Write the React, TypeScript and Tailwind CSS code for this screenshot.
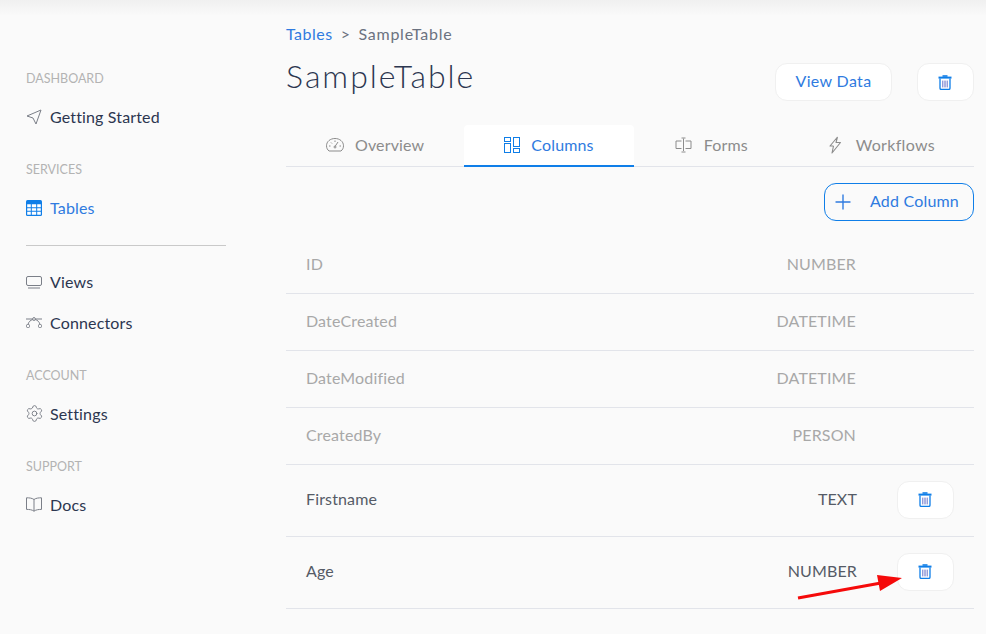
import { Settings, Plus } from "lucide-react";

const ICON_GREY = "#7b7f88";

function TableIcon() {
  return (
    <svg viewBox="0 0 16 16" className="h-4 w-4">
      <rect x="0" y="0" width="16" height="16" rx="1.5" fill="#0f7ee8" />
      <path
        d="M1.2 4.2h3.6v3h-3.6zM5.8 4.2h4.4v3h-4.4zM11.2 4.2h3.6v3h-3.6zM1.2 8.2h3.6v2.6h-3.6zM5.8 8.2h4.4v2.6h-4.4zM11.2 8.2h3.6v2.6h-3.6zM1.2 11.8h3.6v3h-3.6zM5.8 11.8h4.4v3h-4.4zM11.2 11.8h3.6v3h-3.6z"
        fill="#fff"
      />
    </svg>
  );
}

function TrashIcon() {
  return (
    <svg viewBox="0 0 14 15" className="-ml-px h-[15px] w-[14px]" fill="none">
      <path d="M0.5 1.6h13v2h-13z" fill="#0f7ee8" />
      <path d="M4.5 1.8V0.2h5v1.6z" fill="#0f7ee8" />
      <path d="M2 3.5v9.8c0 .7.5 1.1 1.1 1.1h7.8c.6 0 1.1-.4 1.1-1.1V3.5" stroke="#0f7ee8" strokeWidth="1.3" />
      <path d="M4.6 5.6v6.8M6.2 5.6v6.8M7.8 5.6v6.8M9.4 5.6v6.8" stroke="#7d84cf" strokeWidth="0.9" />
    </svg>
  );
}

function ColumnsIcon() {
  return (
    <svg viewBox="0 0 16 16" className="h-4 w-4" fill="none" stroke="#0f7ee8" strokeWidth="1">
      <rect x="0.5" y="0.5" width="6" height="4" />
      <rect x="0.5" y="6.5" width="6" height="9" />
      <rect x="9.5" y="0.5" width="6" height="9" />
      <rect x="9.5" y="11.5" width="6" height="4" />
    </svg>
  );
}

function PlaneIcon() {
  return (
    <svg viewBox="0 0 16 16" className="h-4 w-4" fill="none" stroke={ICON_GREY} strokeWidth="1" strokeLinejoin="round">
      <path d="M15 1 L1 7 L7 9 L10 15 Z" />
    </svg>
  );
}

function MonitorIcon() {
  return (
    <svg viewBox="0 0 16 16" className="h-4 w-4" fill="none" stroke={ICON_GREY} strokeWidth="1">
      <rect x="0.5" y="2.5" width="15" height="9" rx="1.5" />
      <path d="M2 14h12" />
    </svg>
  );
}

function ConnectorIcon() {
  return (
    <svg viewBox="0 0 16 16" className="h-4 w-4" fill="none" stroke={ICON_GREY} strokeWidth="1">
      <circle cx="8" cy="4" r="1.4" />
      <rect x="0.5" y="9.5" width="3" height="3" rx="1" />
      <rect x="12.5" y="9.5" width="3" height="3" rx="1" />
      <path d="M0 4h6.5M9.500 4h6.500M2 9.500C2.500 7 4.500 5 6.800 4.600M14 9.500C13.500 7 11.500 5 9.200 4.600" />
    </svg>
  );
}

function BookIcon() {
  return (
    <svg viewBox="0 0 16 16" className="h-4 w-4" fill="none" stroke={ICON_GREY} strokeWidth="1">
      <path d="M8 2.500C6 1 3 .8.5.8v11.600c2.500 0 5.500.2 7.500 1.800 2-1.600 5-1.800 7.500-1.800V.8C13 .8 10 1 8 2.500ZM8 2.500v11.700" />
    </svg>
  );
}

function GaugeIcon() {
  return (
    <svg viewBox="0 0 18 16" className="h-4 w-[18px]" fill="none" stroke="#8c8c8c" strokeWidth="1">
      <path d="M3 14h12c1.500-1.200 2.500-3 2.500-5.200C17.500 4.500 13.700 1.500 9 1.500S.5 4.500.5 8.800C.5 11 1.500 12.800 3 14Z" />
      <path d="M9 9.500 L12 5M3 9h1.500M13.500 9H15M5 5.500l1 1M9 3.500v1.500" />
      <circle cx="9" cy="10" r="1" />
    </svg>
  );
}

function FormIcon() {
  return (
    <svg viewBox="0 0 16 16" className="mr-px ml-px h-4 w-[17px]" fill="none" stroke="#8c8c8c" strokeWidth="1">
      <path d="M6 4H.5v7.500H6M10 4h5.500v7.500H10M8 1.500v12.500M6 1h4M6 15h4" />
    </svg>
  );
}

function BoltIcon() {
  return (
    <svg viewBox="0 0 14 18" className="mr-[3px] h-[18px] w-[14px]" fill="none" stroke="#8c8c8c" strokeWidth="1.100" strokeLinejoin="round">
      <path d="M9.500 1 L2 10h3.500M9.500 1 L8 6.500h4.500L4 17l1.500-7" />
    </svg>
  );
}

function NavItem({ icon, label, active }: { icon: React.ReactNode; label: string; active?: boolean }) {
  return (
    <div className={`flex h-[41px] items-center gap-2 text-base tracking-[0.15px] ${active ? "text-[#2f7be0]" : "text-[#2c3650]"}`}>
      <span className="flex w-4 shrink-0 justify-center text-[#7b7f88]">{icon}</span>
      {label}
    </div>
  );
}

function SectionLabel({ children }: { children: React.ReactNode }) {
  return <div className="mt-5 h-[30px] pt-[5px] text-[12.5px] leading-4 text-[#b3b3b3]">{children}</div>;
}

function Tab({ icon, label, active }: { icon: React.ReactNode; label: React.ReactNode; active?: boolean }) {
  return (
    <div
      className={`-mb-px flex h-[42px] items-center gap-[11px] rounded-t px-10 text-base tracking-[0.15px] ${
        active ? "border-b-2 border-[#0f7ee8] bg-white text-[#2f7be0]" : "pb-[2px] text-[#8c8c8c]"
      }`}
    >
      {icon}
      {label}
    </div>
  );
}

function DeleteButton({ className }: { className: string }) {
  return (
    <button className={`flex h-[38px] w-[57px] items-center justify-center rounded-xl border border-[#f0f0f0] bg-white ${className}`}>
      <TrashIcon />
    </button>
  );
}

const systemRows = [
  ["ID", "NUMBER"],
  ["DateCreated", "DATETIME"],
  ["DateModified", "DATETIME"],
  ["CreatedBy", "PERSON"],
];

export default function App() {
  return (
    <div className="relative flex h-[634px] w-[986px] overflow-hidden bg-[#fafafa] font-['Lato','Noto_Sans',sans-serif]">
      <div className="absolute inset-x-0 top-0 h-4 bg-gradient-to-b from-[#f0f0f0] to-[#fafafa]" />
      <aside className="w-[286px] shrink-0 pt-[46px] pl-[26px]">
        <SectionLabel>DASHBOARD</SectionLabel>
        <NavItem icon={<PlaneIcon />} label="Getting Started" />
        <SectionLabel>SERVICES</SectionLabel>
        <NavItem icon={<TableIcon />} label="Tables" active />
        <div className="mt-[17px] mb-[15px] h-px w-[200px] bg-[#c9c9c9]" />
        <NavItem icon={<MonitorIcon />} label="Views" />
        <NavItem icon={<ConnectorIcon />} label="Connectors" />
        <SectionLabel>ACCOUNT</SectionLabel>
        <NavItem icon={<Settings size={19} strokeWidth={1.2} className="shrink-0" />} label="Settings" />
        <SectionLabel>SUPPORT</SectionLabel>
        <NavItem icon={<BookIcon />} label="Docs" />
      </aside>

      <main className="relative flex w-[688px] flex-col pt-[24px]">
        <div className="flex h-5 items-center gap-2 text-base tracking-[0.5px] text-[#6b7280]">
          <span className="text-[#2f7be0]">Tables</span>
          <span>&gt;</span>
          <span className="tracking-[0.75px]">SampleTable</span>
        </div>
        <div className="mt-[10px] flex h-[52px] items-start justify-between">
          <h1 className="text-[32px] leading-[44px] font-light tracking-[2px] text-[#2c3650]">SampleTable</h1>
          <div className="flex items-center gap-[25px] pt-[9px]">
            <button className="h-[38px] w-[117px] rounded-xl border border-[#f0f0f0] bg-white pb-[2px] text-base tracking-[0.35px] text-[#2f7be0]">
              View Data
            </button>
            <DeleteButton className="" />
          </div>
        </div>

        <div className="mt-[19px] flex justify-between border-b border-[#e2e4ea]">
          <div className="flex">
            <Tab icon={<GaugeIcon />} label="Overview" />
            <Tab icon={<ColumnsIcon />} label="Columns" active />
            <Tab icon={<FormIcon />} label="Forms" />
          </div>
          <Tab icon={<BoltIcon />} label={<span className="tracking-[0.3px]">Workflows</span>} />
        </div>

        <div className="mt-4 flex justify-end">
          <button className="flex h-[38px] w-[150px] items-center rounded-xl border border-[#0f7ee8] pr-[14px] pl-[6px] text-base tracking-[0.2px] text-[#2f7be0]">
            <Plus size={24} strokeWidth={1.4} />
            <span className="ml-auto pb-[2px]">Add Column</span>
          </button>
        </div>

        <div className="mt-4 text-base tracking-[0.15px]">
          {systemRows.map(([name, type]) => (
            <div key={name} className="flex h-[57px] items-center border-b border-[#e2e4ea] pr-[118px] pl-5 text-[#a8a8a8]">
              <span className="flex-1 pb-[2px]">{name}</span>
              <span className="pb-[2px]">{type}</span>
            </div>
          ))}
          {[
            ["Firstname", "TEXT"],
            ["Age", "NUMBER"],
          ].map(([name, type]) => (
            <div key={name} className="flex h-[72px] items-center border-b border-[#e2e4ea] pr-5 pl-5 text-[#555b66]">
              <span className="flex-1 pb-1">{name}</span>
              <span className="pb-1">{type}</span>
              <DeleteButton className="mb-[2px] ml-10" />
            </div>
          ))}
        </div>
      </main>

      {/* annotation arrow over the last row */}
      <svg className="pointer-events-none absolute top-[565px] left-[795px] h-[40px] w-[110px]" viewBox="0 0 110 40">
        <path d="M3 33 L86 18" stroke="#f50a0a" strokeWidth="3" />
        <path d="M107 13 L82 10 L85 26 Z" fill="#f50a0a" />
      </svg>
    </div>
  );
}
